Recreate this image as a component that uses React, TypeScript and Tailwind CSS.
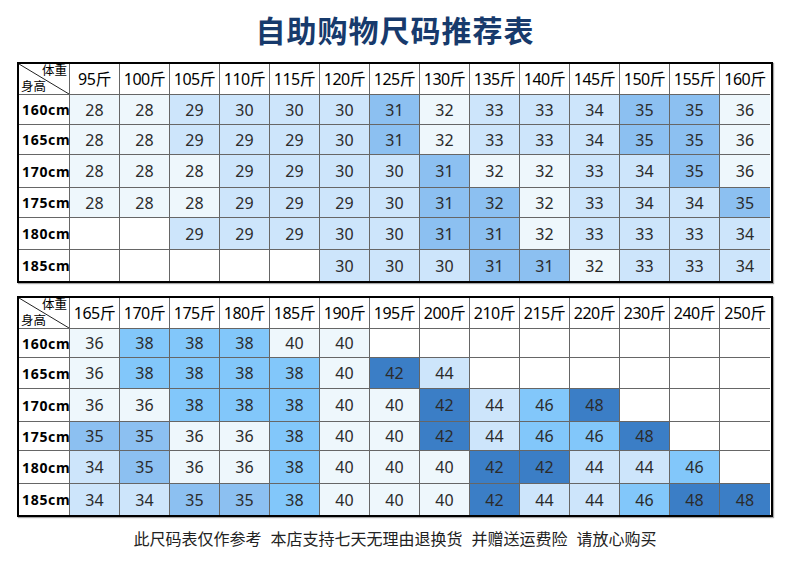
import React from 'react';

// 尺码颜色等级
const tone: Record<string, string> = {
  a: 'bg-[#eef7fc]',
  b: 'bg-[#cde5fb]',
  c: 'bg-[#8cc0f1]',
  s: 'bg-[#82c7fa]',
  d: 'bg-[#3b7ec6]',
};

type Table = {
  weights: string[];
  heights: number[];
  rows: { label: string; cells: string }[];
};

const table1: Table = {
  weights: ['95', '100', '105', '110', '115', '120', '125', '130', '135', '140', '145', '150', '155', '160'],
  heights: [31, 30, 30, 33, 30, 32, 31],
  rows: [
    { label: '160cm', cells: '28a 28a 29b 30b 30b 30b 31c 32a 33b 33b 34b 35c 35c 36a' },
    { label: '165cm', cells: '28a 28a 29b 29b 29b 30b 31c 32a 33b 33b 34b 35c 35c 36a' },
    { label: '170cm', cells: '28a 28a 28a 29b 29b 30b 30b 31c 32a 32a 33b 34b 35c 36a' },
    { label: '175cm', cells: '28a 28a 28a 29b 29b 29b 30b 31c 32c 32a 33b 34b 34b 35c' },
    { label: '180cm', cells: '- - 29b 29b 29b 30b 30b 31c 31c 32a 33b 33b 33b 34b' },
    { label: '185cm', cells: '- - - - - 30b 30b 30b 31c 31c 32a 33b 33b 34b' },
  ],
};

const table2: Table = {
  weights: ['165', '170', '175', '180', '185', '190', '195', '200', '210', '215', '220', '230', '240', '250'],
  heights: [31, 29, 31, 33, 29, 33, 31],
  rows: [
    { label: '160cm', cells: '36a 38s 38s 38s 40a 40a - - - - - - - -' },
    { label: '165cm', cells: '36a 38s 38s 38s 38s 40a 42d 44b - - - - - -' },
    { label: '170cm', cells: '36a 36a 38s 38s 38s 40a 40a 42d 44b 46s 48d - - -' },
    { label: '175cm', cells: '35c 35c 36a 36a 38s 40a 40a 42d 44b 46s 46s 48d - -' },
    { label: '180cm', cells: '34b 35c 36a 36a 38s 40a 40a 40a 42d 42d 44b 44b 46s -' },
    { label: '185cm', cells: '34b 34b 35c 35c 38s 40a 40a 40a 42d 44b 44b 46s 48d 48d' },
  ],
};

const font = { fontFamily: '"Noto Sans", "Noto Sans CJK SC", sans-serif' };

function Corner() {
  return (
    <div className="relative flex h-full flex-col justify-between px-[2px] text-[12.5px] leading-[14px] text-black">
      <svg className="absolute inset-0 h-full w-full" preserveAspectRatio="none" viewBox="0 0 50 30">
        <line x1="0" y1="0" x2="50" y2="30" stroke="#222" strokeWidth="1" vectorEffect="non-scaling-stroke" />
      </svg>
      <span className="self-end">体重</span>
      <span className="self-start">身高</span>
    </div>
  );
}

function SizeTable({ data }: { data: Table }) {
  const lastRow = data.rows.length;
  return (
    <div className="mx-auto w-[756px] border-2 border-black bg-white shadow-[1px_1px_1px_rgba(0,0,0,0.35)]">
      {[null, ...data.rows].map((row, r) => {
        const h = data.heights[r];
        const rowLine = r < lastRow ? 'border-b border-[#666]' : '';
        return (
          <div key={r} className="flex" style={{ height: h }}>
            <div className={`w-[51px] shrink-0 border-r border-[#666] ${rowLine}`}>
              {row ? (
                <div className="flex h-full items-center pl-[3px] text-[14px] font-bold tracking-[0.7px] text-black">
                  {row.label}
                </div>
              ) : (
                <Corner />
              )}
            </div>
            {row
              ? row.cells.split(' ').map((c, i) => {
                  const empty = c === '-';
                  const bg = empty ? 'bg-white' : tone[c.slice(-1)];
                  return (
                    <div
                      key={i}
                      className={`flex w-[50px] shrink-0 items-center justify-center text-[16px] text-[#2b2b2b] ${bg} ${rowLine} ${
                        i < 13 ? 'border-r border-[#666]' : 'w-[49px]'
                      }`}
                    >
                      {empty ? '' : c.slice(0, -1)}
                    </div>
                  );
                })
              : data.weights.map((w, i) => (
                  <div
                    key={i}
                    className={`flex w-[50px] shrink-0 items-center justify-center text-[16px] tracking-[-0.5px] text-black ${rowLine} ${
                      i < 13 ? 'border-r border-[#666]' : 'w-[49px]'
                    }`}
                  >
                    {w}斤
                  </div>
                ))}
          </div>
        );
      })}
    </div>
  );
}

export default function App() {
  return (
    <div className="h-[562px] w-[790px] bg-white" style={font}>
      <div className="flex h-[62px] items-center justify-center">
        <h1 className="text-[30px] font-bold leading-none tracking-[1px] text-[#173a6c]">自助购物尺码推荐表</h1>
      </div>
      <SizeTable data={table1} />
      <div className="h-[13px]" />
      <SizeTable data={table2} />
      <div className="flex h-[44px] items-center justify-center gap-[9px] text-[16px] text-[#222]">
        <span>此尺码表仅作参考</span>
        <span>本店支持七天无理由退换货</span>
        <span>并赠送运费险</span>
        <span>请放心购买</span>
      </div>
    </div>
  );
}
